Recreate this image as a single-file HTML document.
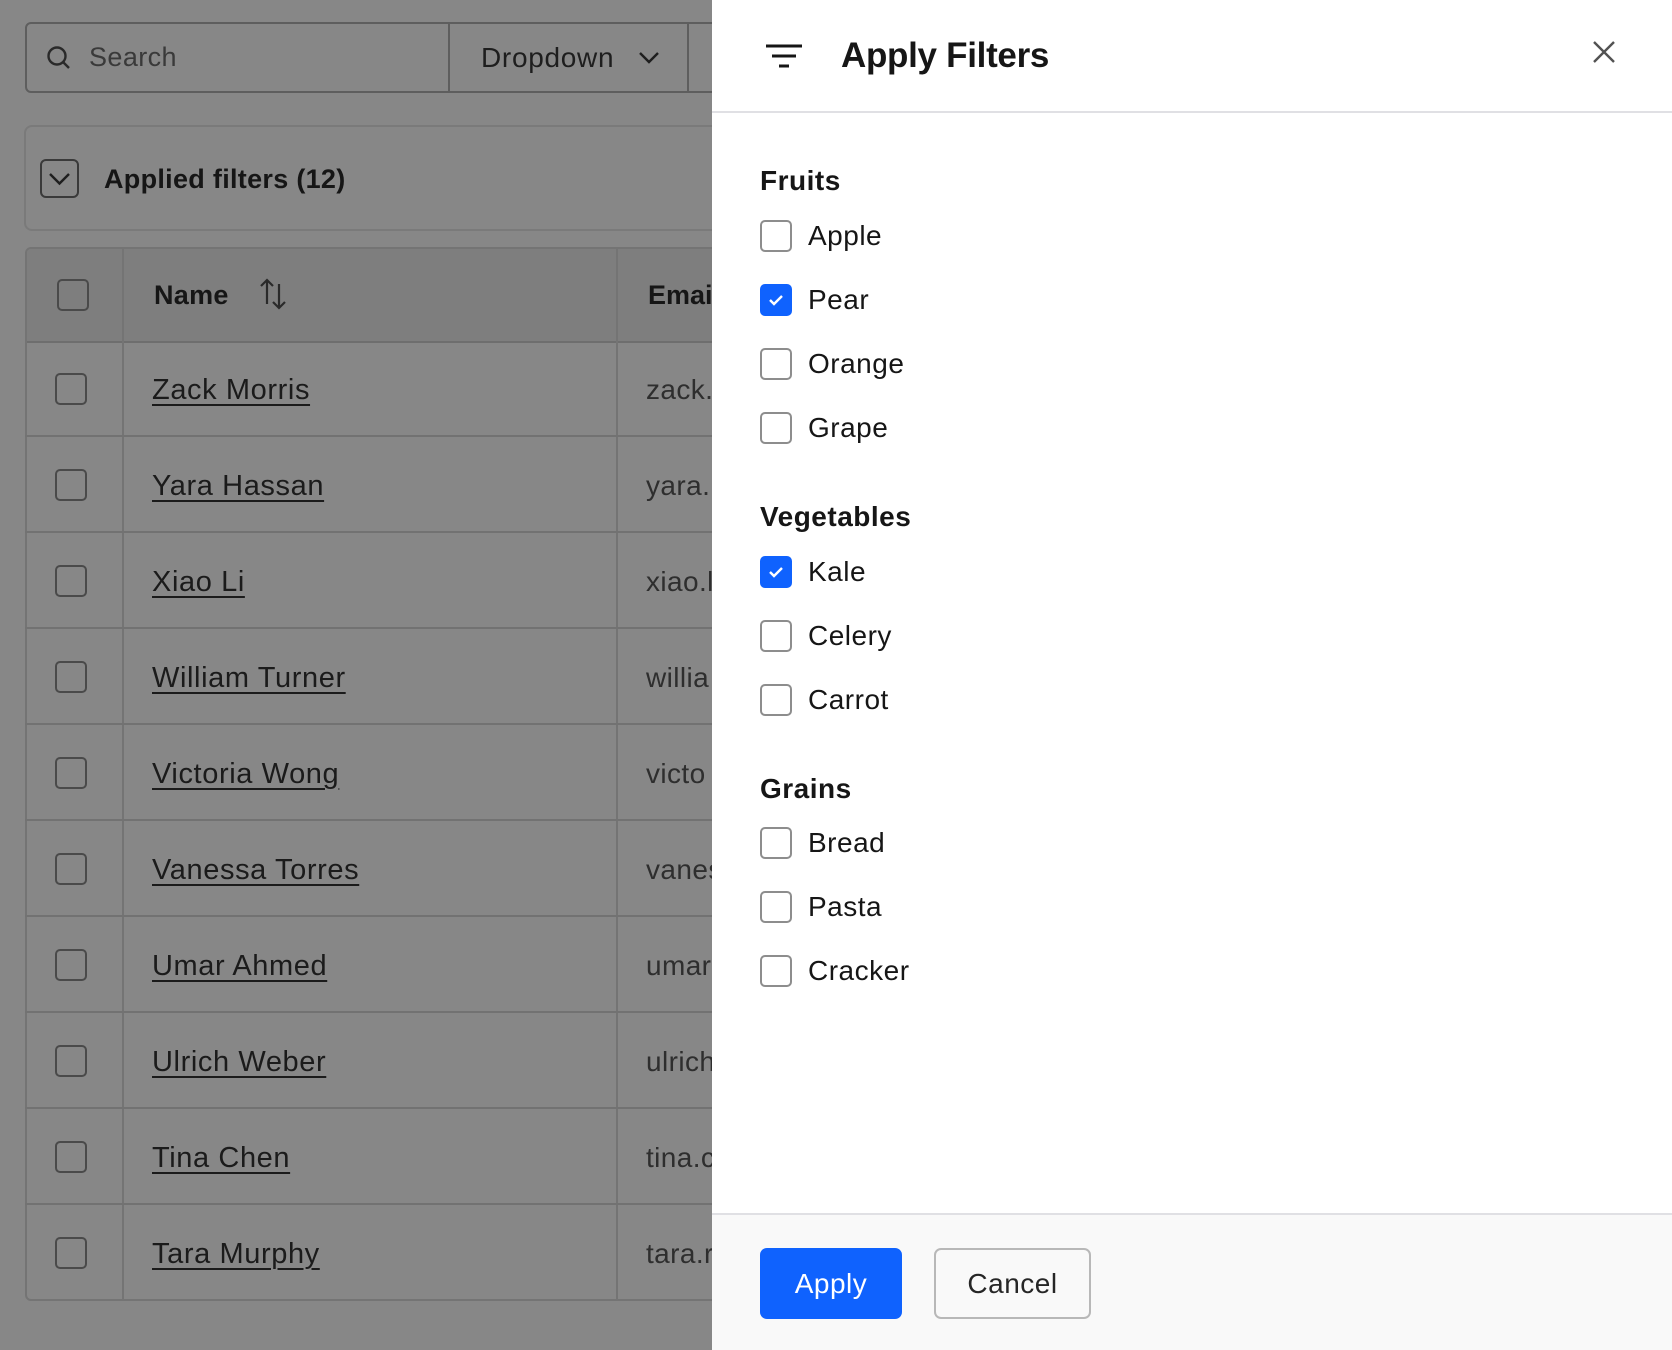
<!DOCTYPE html>
<html><head><style>
*{box-sizing:border-box;margin:0;padding:0}
body{width:1672px;height:1350px;overflow:hidden;font-family:"Liberation Sans",sans-serif;background:#878787;position:relative;color:#161616}
.abs{position:absolute}
.bg{position:absolute;left:0;top:0;width:712px;height:1350px;background:#878787}
.search{left:25px;top:22px;width:700px;height:71px;border:2px solid #5e5e5e;border-radius:6px;display:flex}
.search .s{width:423px;border-right:2px solid #5e5e5e;display:flex;align-items:center;padding-left:18px;font-size:27px;color:#3a3a3a;letter-spacing:0.4px}
.search .d{width:239px;border-right:2px solid #5e5e5e;display:flex;align-items:center;padding-left:31px;font-size:28px;color:#1e1e1e;letter-spacing:0.7px}
.card{left:24px;top:125px;width:720px;height:106px;border:2px solid #7a7a7a;border-radius:8px}
.chev{left:40px;top:159px;width:39px;height:39px;border:2px solid #3a3a3a;border-radius:6px}
.table{left:25px;top:247px;width:720px;height:1054px;border:2px solid #747474;border-radius:6px;overflow:hidden}
.hdr{position:absolute;left:0;top:0;width:100%;height:94px;background:#7e7e7e;border-bottom:2px solid #6e6e6e}
.vl{position:absolute;top:0;width:2px;height:100%;background:#747474}
.cb{position:absolute;width:32px;height:32px;border:2px solid #4a4a4a;border-radius:5px}
.nm{position:absolute;left:127px;font-size:29px;letter-spacing:0.6px;color:#1b1b1b;text-decoration:underline;text-underline-offset:5px;text-decoration-thickness:2px}
.em{position:absolute;left:621px;font-size:28px;letter-spacing:0.4px;color:#2e2e2e;white-space:nowrap}
.panel{left:712px;top:0;width:960px;height:1350px;background:#fff}
.ph{position:absolute;left:0;top:0;width:100%;height:113px;border-bottom:2px solid #e0e0e4}
.title{position:absolute;left:129px;top:36px;font-size:35px;font-weight:700;color:#161616;letter-spacing:-0.3px}
.sec{position:absolute;left:48px;font-size:28px;font-weight:700;color:#161616;letter-spacing:0.5px}
.opt{position:absolute;left:48px;height:32px;display:flex;align-items:center}
.opt .b{width:32px;height:32px;border:2px solid #8d8d8d;border-radius:5px;background:#fff;position:relative}
.opt .b.on{background:#0f62fe;border-color:#0f62fe}
.opt span{margin-left:16px;font-size:28px;letter-spacing:0.5px;color:#161616}
.foot{position:absolute;left:0;top:1213px;width:100%;height:137px;background:#f9f9f9;border-top:2px solid #e0e0e4}
.btn{position:absolute;top:33px;height:71px;border-radius:7px;font-size:28px;letter-spacing:0.5px;display:flex;align-items:center;justify-content:center}
</style></head><body>
<div class="bg"></div>
<div class="abs search"><div class="s"><svg width="28" height="28" viewBox="0 0 28 28"><circle cx="12" cy="12" r="8.5" fill="none" stroke="#2a2a2a" stroke-width="2.4"/><path d="M18 18l6 6" stroke="#2a2a2a" stroke-width="2.4"/></svg><span style="margin-left:16px">Search</span></div><div class="d">Dropdown<svg style="margin-left:24px" width="22" height="14" viewBox="0 0 22 14"><path d="M2 2l9 9 9-9" fill="none" stroke="#1e1e1e" stroke-width="2.4"/></svg></div></div>
<div class="abs card"></div>
<div class="abs chev"><svg width="35" height="35" viewBox="0 0 35 35"><path d="M8 13l9.5 9.5 9.5-9.5" fill="none" stroke="#1e1e1e" stroke-width="2.4"/></svg></div>
<div class="abs" style="left:104px;top:164px;font-size:27px;font-weight:700;color:#161616;letter-spacing:0.3px">Applied filters (12)</div>
<div class="abs table">
<div class="hdr"></div>
<div class="vl" style="left:95px"></div><div class="vl" style="left:589px"></div>
<div class="cb" style="left:30px;top:30px"></div>
<div class="abs" style="left:127px;top:31px;font-size:27px;font-weight:700;color:#161616;letter-spacing:0.3px">Name</div>
<svg class="abs" style="left:231px;top:27px" width="32" height="36" viewBox="0 0 32 36"><path d="M9 28V4M3 10l6-6 6 6M21 8v24M15 26l6 6 6-6" fill="none" stroke="#2a2a2a" stroke-width="2.2"/></svg>
<div class="abs" style="left:621px;top:31px;font-size:27px;font-weight:700;color:#161616">Email</div>
</div>
<div id="rows"></div>
<div class="abs panel">
<div class="ph">
<svg class="abs" style="left:54px;top:44px" width="36" height="24" viewBox="0 0 36 24"><path d="M0 2h36M6 12h24M13 22h10" stroke="#161616" stroke-width="3"/></svg>
<div class="title">Apply Filters</div>
<svg class="abs" style="left:881px;top:41px" width="22" height="22" viewBox="0 0 22 22"><path d="M1 1l20 20M21 1L1 21" stroke="#525252" stroke-width="2.4"/></svg>
</div>
<div class="sec" style="top:165px">Fruits</div>
<div class="opt" style="top:220px"><div class="b"></div><span>Apple</span></div>
<div class="opt" style="top:284px"><div class="b on"><svg width="28" height="28" viewBox="0 0 28 28"><path d="M8 14l4 4 8-8" fill="none" stroke="#fff" stroke-width="2.4"/></svg></div><span>Pear</span></div>
<div class="opt" style="top:348px"><div class="b"></div><span>Orange</span></div>
<div class="opt" style="top:412px"><div class="b"></div><span>Grape</span></div>
<div class="sec" style="top:501px">Vegetables</div>
<div class="opt" style="top:556px"><div class="b on"><svg width="28" height="28" viewBox="0 0 28 28"><path d="M8 14l4 4 8-8" fill="none" stroke="#fff" stroke-width="2.4"/></svg></div><span>Kale</span></div>
<div class="opt" style="top:620px"><div class="b"></div><span>Celery</span></div>
<div class="opt" style="top:684px"><div class="b"></div><span>Carrot</span></div>
<div class="sec" style="top:773px">Grains</div>
<div class="opt" style="top:827px"><div class="b"></div><span>Bread</span></div>
<div class="opt" style="top:891px"><div class="b"></div><span>Pasta</span></div>
<div class="opt" style="top:955px"><div class="b"></div><span>Cracker</span></div>
<div class="foot">
<div class="btn" style="left:48px;width:142px;background:#0f62fe;color:#fff">Apply</div>
<div class="btn" style="left:222px;width:157px;border:2px solid #b8b8b8;background:#f9f9f9;color:#262626">Cancel</div>
</div>
</div>
<script>
var d=[["Zack Morris","zack."],["Yara Hassan","yara."],["Xiao Li","xiao.l"],["William Turner","willia"],["Victoria Wong","victo"],["Vanessa Torres","vanes"],["Umar Ahmed","umar"],["Ulrich Weber","ulrich"],["Tina Chen","tina.c"],["Tara Murphy","tara.r"]];
var h="";d.forEach(function(r,i){var t=341+i*96;h+='<div class="abs" style="left:25px;top:'+t+'px;width:687px;height:96px;'+(i<9?'border-bottom:2px solid #727272':'')+'"><div class="cb" style="left:30px;top:32px"></div><div class="nm" style="top:33px">'+r[0]+'</div><div class="em" style="top:33px">'+r[1]+'</div></div>';});
document.getElementById("rows").innerHTML=h;
</script>
</body></html>
